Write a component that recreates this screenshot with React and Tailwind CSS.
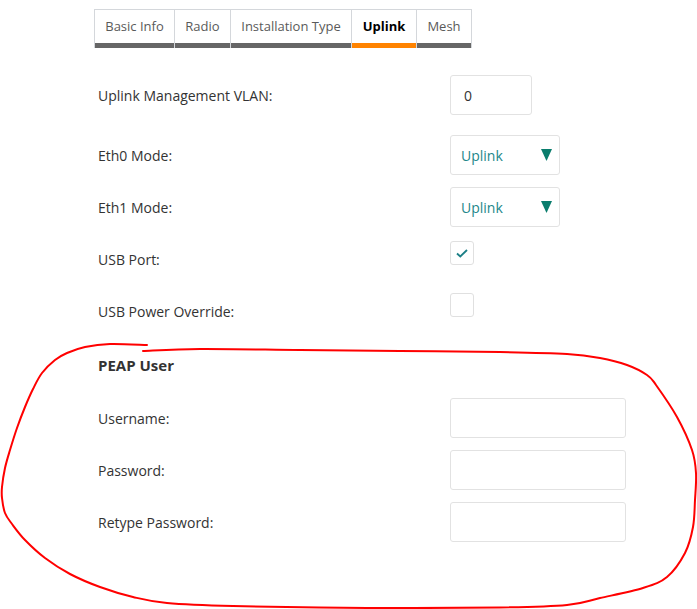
import React from 'react';

const tabs = [
  { label: 'Basic Info', w: 'w-[81px]' },
  { label: 'Radio', w: 'w-[56px]' },
  { label: 'Installation Type', w: 'w-[121px]' },
  { label: 'Uplink', w: 'w-[65px]', active: true },
  { label: 'Mesh', w: 'w-[55px]' },
];

const scribble = [
  [143, 351], [200, 349], [300, 350], [400, 351], [500, 352], [567, 354], [600, 358], [627, 365],
  [647, 375], [656, 385], [677, 417], [692, 450], [696, 473], [695, 500], [693, 527], [685, 553],
  [667, 577], [643, 588], [600, 598], [567, 605], [500, 607.5], [367, 608], [233, 606], [167, 603],
  [133, 597], [100, 587], [70, 574], [45, 558], [25, 540], [12, 524], [5, 513], [2, 498], [2, 487],
  [5, 468], [10, 450], [17, 428], [25, 407], [33, 389], [42, 373], [55, 360], [67, 353], [85, 347],
  [110, 344], [147, 345],
];

// catmull-rom -> bezier so the pen line stays smooth
function smoothPath(pts) {
  let d = `M${pts[0][0]},${pts[0][1]}`;
  for (let i = 0; i < pts.length - 1; i++) {
    const p0 = pts[i - 1] || pts[i];
    const p1 = pts[i];
    const p2 = pts[i + 1];
    const p3 = pts[i + 2] || p2;
    const c1 = [p1[0] + (p2[0] - p0[0]) / 6, p1[1] + (p2[1] - p0[1]) / 6];
    const c2 = [p2[0] - (p3[0] - p1[0]) / 6, p2[1] - (p3[1] - p1[1]) / 6];
    d += ` C${c1[0]},${c1[1]} ${c2[0]},${c2[1]} ${p2[0]},${p2[1]}`;
  }
  return d;
}

function Row({ label, children, top = 'mt-[12px]', alignTop }) {
  return (
    <div className={`flex h-[40px] ${alignTop ? 'items-start' : 'items-center'} ${top}`}>
      <div className={`w-[352px] text-[14px] text-[#333] ${alignTop ? 'self-center' : ''}`}>{label}</div>
      {children}
    </div>
  );
}

function Select() {
  return (
    <div className="flex h-[40px] w-[110px] items-center justify-between rounded-[3px] border border-[#e2e2e2] pl-[10px] pr-[7px]">
      <span className="text-[14px] text-[#23878a]">Uplink</span>
      <svg width="11" height="12" viewBox="0 0 11 12">
        <path d="M0 0 H11 L5.5 12 Z" fill="#0a7d6d" />
      </svg>
    </div>
  );
}

function Checkbox({ checked }) {
  return (
    <div className="mt-[2px] flex h-[24px] w-[24px] items-center justify-center rounded-[3px] border border-[#e0e0e0]">
      {checked && (
        <svg width="12" height="9" viewBox="0 0 12 9">
          <path d="M1 4.5 L4.3 7.5 L11 1" fill="none" stroke="#1b7f86" strokeWidth="1.8" />
        </svg>
      )}
    </div>
  );
}

function TextBox() {
  return <div className="h-[40px] w-[176px] rounded-[3px] border border-[#e2e2e2]" />;
}

export default function App() {
  return (
    <div className="relative h-[609px] w-[697px] overflow-hidden bg-white font-['Open_Sans',sans-serif]">
      <div className="pl-[94px] pt-[9px]">
        <div className="flex">
          {tabs.map((t, i) => (
            <div
              key={t.label}
              className={`${t.w} flex h-[39px] flex-col border-t border-r border-[#d4d7db] ${i === 0 ? 'border-l' : ''}`}
            >
              <div
                className={`flex flex-1 items-center justify-center text-[13px] ${
                  t.active ? 'font-bold text-black' : 'text-[#5a5a5a]'
                }`}
              >
                {t.label}
              </div>
              <div className={`h-[5px] ${t.active ? 'bg-[#ff8300]' : 'bg-[#666666]'}`} />
            </div>
          ))}
        </div>

        <div className="pl-[4px]">
          <Row label="Uplink Management VLAN:" top="mt-[27px]">
            <div className="flex h-[40px] w-[82px] items-center rounded-[3px] border border-[#e2e2e2] pl-[13px] text-[14px] text-[#333]">
              0
            </div>
          </Row>
          <Row label="Eth0 Mode:" top="mt-[20px]">
            <Select />
          </Row>
          <Row label="Eth1 Mode:">
            <Select />
          </Row>
          <Row label="USB Port:" alignTop>
            <Checkbox checked />
          </Row>
          <Row label="USB Power Override:" alignTop>
            <Checkbox />
          </Row>

          <div className="mt-[14px] flex h-[40px] items-center text-[15px] font-bold text-[#333]">PEAP User</div>

          <Row label="Username:" top="mt-[13px]">
            <TextBox />
          </Row>
          <Row label="Password:">
            <TextBox />
          </Row>
          <Row label="Retype Password:">
            <TextBox />
          </Row>
        </div>
      </div>

      <svg className="pointer-events-none absolute left-0 top-0" width="697" height="609" viewBox="0 0 697 609">
        <path d={smoothPath(scribble)} fill="none" stroke="#ff0000" strokeWidth="2" strokeLinecap="round" />
      </svg>
    </div>
  );
}
